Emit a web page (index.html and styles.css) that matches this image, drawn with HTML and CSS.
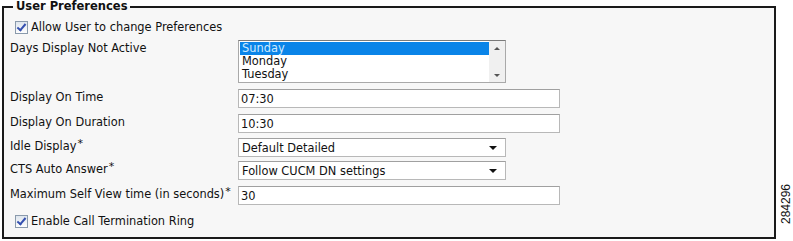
FILE: index.html
```html
<!DOCTYPE html>
<html lang="en">
<head>
<meta charset="UTF-8">
<title>User Preferences</title>
<link rel="stylesheet" href="styles.css">
</head>
<body>
    <div class="page">
        <fieldset class="prefs">
            <legend>User Preferences</legend>

            <div class="check-row first">
                <span class="checkbox checked"></span>
                <span>Allow User to change Preferences</span>
            </div>

            <div class="row days">
                <div class="label">Days Display Not Active</div>
                <div class="listbox">
                    <div class="items">
                        <div class="item selected">Sunday</div>
                        <div class="item">Monday</div>
                        <div class="item">Tuesday</div>
                    </div>
                    <div class="scroll">
                        <span class="up"></span>
                        <span class="down"></span>
                    </div>
                </div>
            </div>

            <div class="row gap6">
                <div class="label">Display On Time</div>
                <div class="text-input">07:30</div>
            </div>

            <div class="row gap6">
                <div class="label">Display On Duration</div>
                <div class="text-input">10:30</div>
            </div>

            <div class="row gap5">
                <div class="label">Idle Display<sup>*</sup></div>
                <div class="dropdown">Default Detailed<span class="arrow"></span></div>
            </div>

            <div class="row gap4">
                <div class="label">CTS Auto Answer<sup>*</sup></div>
                <div class="dropdown">Follow CUCM DN settings<span class="arrow"></span></div>
            </div>

            <div class="row gap6">
                <div class="label">Maximum Self View time (in seconds)<sup>*</sup></div>
                <div class="text-input">30</div>
            </div>

            <div class="check-row last">
                <span class="checkbox checked"></span>
                <span>Enable Call Termination Ring</span>
            </div>
        </fieldset>
        <div class="figure-id">284296</div>
    </div>
</body>
</html>
```

FILE: styles.css
```css
body {
    margin: 0;
    background-color: #fff;
    font-family: 'DejaVu Sans', Verdana, sans-serif;
    font-size: 11.4px;
    color: #111;
}
.page {
    display: flex;
    align-items: flex-start;
    width: 793px;
    height: 241px;
}
.prefs {
    box-sizing: border-box;
    width: 775px;
    height: 239px;
    margin: 0 0 0 2px;
    padding: 0 6px;
    border: 2px solid #1a1a1a;
    background-color: #f7f7f7;
}
.prefs legend {
    font-weight: bold;
    font-size: 11.5px;
    line-height: 13px;
    padding: 0 3px;
    margin-left: 3px;
    color: #111;
}
.check-row {
    display: flex;
    align-items: center;
    gap: 3px;
    height: 14px;
    padding-left: 5px;
}
.check-row.first {
    margin-top: 7px;
}
.check-row.last {
    margin-top: 9px;
}
.checkbox {
    box-sizing: border-box;
    width: 13px;
    height: 13px;
    border: 1px solid #8a9aac;
    background: linear-gradient(#dfe6ee, #fdfdfd);
    position: relative;
}
.checkbox.checked::after {
    content: "";
    position: absolute;
    left: 3px;
    top: 0px;
    width: 3px;
    height: 7px;
    border-right: 2px solid #3550b0;
    border-bottom: 2px solid #3550b0;
    transform: rotate(40deg);
}
.row {
    display: grid;
    grid-template-columns: 228px auto;
    align-items: start;
    height: 19px;
}
.row.gap4 {
    margin-top: 4px;
}
.row.gap5 {
    margin-top: 5px;
}
.row.gap6 {
    margin-top: 6px;
}
.row.days {
    margin-top: 6px;
    height: 43px;
}
.label {
    padding-top: 1px;
    white-space: nowrap;
}
.label sup {
    font-size: 11px;
    vertical-align: 0;
    position: relative;
    top: -3px;
    margin-left: 1px;
}
.listbox {
    box-sizing: border-box;
    display: flex;
    width: 268px;
    height: 43px;
    border: 1px solid #a9a9a9;
    border-top-color: #7a7a7a;
    background-color: #fff;
}
.items {
    flex: 1;
    padding: 1px 0 0 1px;
}
.item {
    height: 13px;
    line-height: 13px;
    padding-left: 2px;
}
.item.selected {
    background-color: #0a84e8;
    color: #cdeaff;
}
.scroll {
    width: 16px;
    background-color: #f0f0f0;
    display: flex;
    flex-direction: column;
    justify-content: space-between;
    align-items: center;
    padding: 6px 0 5px;
}
.scroll .up {
    width: 0;
    height: 0;
    border-left: 3px solid transparent;
    border-right: 3px solid transparent;
    border-bottom: 3px solid #555;
}
.scroll .down {
    width: 0;
    height: 0;
    border-left: 3px solid transparent;
    border-right: 3px solid transparent;
    border-top: 3px solid #555;
}
.text-input {
    box-sizing: border-box;
    width: 322px;
    height: 19px;
    padding: 2px 0 0 2px;
    border: 1px solid #b8b8b8;
    border-top-color: #a0a0a0;
    background-color: #fff;
}
.dropdown {
    box-sizing: border-box;
    display: flex;
    justify-content: space-between;
    align-items: center;
    width: 268px;
    height: 19px;
    padding: 0 8px 0 3px;
    border: 1px solid #b8b8b8;
    border-top-color: #a0a0a0;
    background-color: #fff;
}
.dropdown .arrow {
    width: 0;
    height: 0;
    border-left: 4px solid transparent;
    border-right: 4px solid transparent;
    border-top: 4px solid #111;
}
.figure-id {
    writing-mode: vertical-rl;
    transform: rotate(180deg);
    font-family: 'Liberation Sans', Arial, sans-serif;
    font-size: 12px;
    margin: 184px 0 0 3px;
    color: #111;
}
```
